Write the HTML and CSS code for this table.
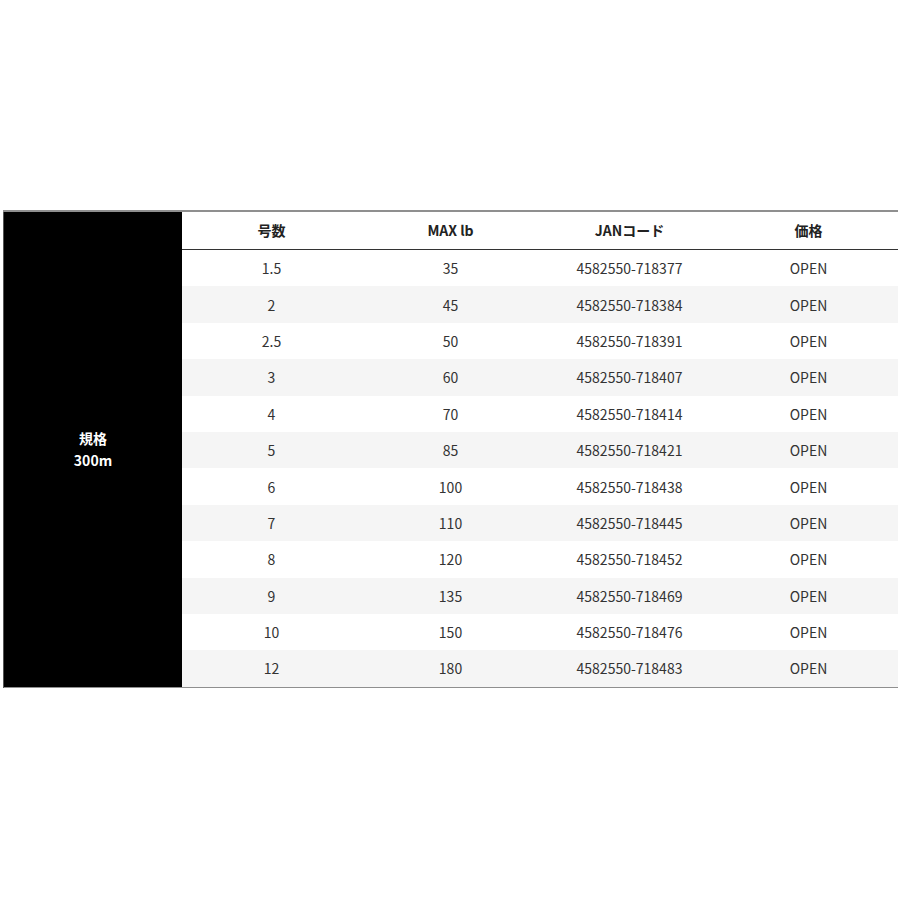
FILE: index.html
```
<!DOCTYPE html>
<html lang="ja">
<head>
<meta charset="utf-8">
<link rel="stylesheet" href="styles.css">
</head>
<body>
<div class="wrap">
<table class="spec">
<tbody>
<tr class="head">
<th class="label" rowspan="13">規格<br>300m</th>
<th>号数</th><th>MAX lb</th><th>JANコード</th><th>価格</th>
</tr>
<tr><td>1.5</td><td>35</td><td>4582550-718377</td><td>OPEN</td></tr>
<tr class="alt"><td>2</td><td>45</td><td>4582550-718384</td><td>OPEN</td></tr>
<tr><td>2.5</td><td>50</td><td>4582550-718391</td><td>OPEN</td></tr>
<tr class="alt"><td>3</td><td>60</td><td>4582550-718407</td><td>OPEN</td></tr>
<tr><td>4</td><td>70</td><td>4582550-718414</td><td>OPEN</td></tr>
<tr class="alt"><td>5</td><td>85</td><td>4582550-718421</td><td>OPEN</td></tr>
<tr><td>6</td><td>100</td><td>4582550-718438</td><td>OPEN</td></tr>
<tr class="alt"><td>7</td><td>110</td><td>4582550-718445</td><td>OPEN</td></tr>
<tr><td>8</td><td>120</td><td>4582550-718452</td><td>OPEN</td></tr>
<tr class="alt"><td>9</td><td>135</td><td>4582550-718469</td><td>OPEN</td></tr>
<tr><td>10</td><td>150</td><td>4582550-718476</td><td>OPEN</td></tr>
<tr class="alt"><td>12</td><td>180</td><td>4582550-718483</td><td>OPEN</td></tr>
</tbody>
</table>
</div>
</body>
</html>
```
FILE: styles.css
```
html, body {
  margin: 0;
  padding: 0;
  background: #fff;
}
body {
  font-family: "Noto Sans CJK JP", "Noto Sans", sans-serif;
  color: #333;
}
.wrap {
  padding: 210px 2px 0 3px;
}
.spec {
  width: 895px;
  border-collapse: collapse;
  table-layout: fixed;
  border-top: 2px solid #8f8f8f;
  border-bottom: 1px solid #8f8f8f;
  font-size: 14px;
}
.spec th, .spec td {
  padding: 0;
  text-align: center;
  vertical-align: middle;
}
.spec .head th {
  height: 35px;
  padding-bottom: 2px;
  font-weight: bold;
  color: #222;
  border-bottom: 1px solid #333;
}
.spec .head th.label {
  width: 178px;
  padding: 0;
  background: #000;
  color: #fff;
  line-height: 22px;
  border-bottom: none;
  border-left: 1px solid #555;
}
.spec td {
  height: 36.4px;
  color: #333;
}
.spec tr.alt td {
  background: #f5f5f5;
}
```
